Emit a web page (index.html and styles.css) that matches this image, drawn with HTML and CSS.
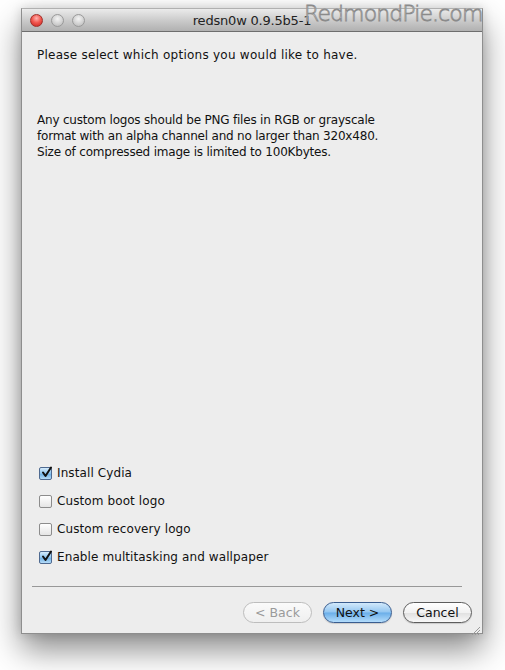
FILE: index.html
```html
<!DOCTYPE html>
<html>
<head>
<meta charset="utf-8">
<link rel="stylesheet" href="styles.css">
</head>
<body>
<div class="stage">
  <div class="window">
    <div class="titlebar">
      <div class="lights">
        <span class="light red"></span>
        <span class="light gray"></span>
        <span class="light gray"></span>
      </div>
      <div class="title">redsn0w 0.9.5b5-1</div>
      <div></div>
    </div>
    <div class="content">
      <p class="intro">Please select which options you would like to have.</p>
      <p class="info">Any custom logos should be PNG files in RGB or grayscale<br>format with an alpha channel and no larger than 320x480.<br>Size of compressed image is limited to 100Kbytes.</p>
      <div class="options">
        <label class="option"><span class="box checked"><svg viewBox="0 0 13 13" width="13" height="13"><path d="M3 6.5 L5.5 10 L11 1.5" fill="none" stroke="#111" stroke-width="2" stroke-linecap="round" stroke-linejoin="round"/></svg></span>Install Cydia</label>
        <label class="option"><span class="box"></span>Custom boot logo</label>
        <label class="option"><span class="box"></span>Custom recovery logo</label>
        <label class="option"><span class="box checked"><svg viewBox="0 0 13 13" width="13" height="13"><path d="M3 6.5 L5.5 10 L11 1.5" fill="none" stroke="#111" stroke-width="2" stroke-linecap="round" stroke-linejoin="round"/></svg></span>Enable multitasking and wallpaper</label>
      </div>
      <div class="separator"></div>
      <div class="buttons">
        <span class="btn disabled">&lt; Back</span>
        <span class="btn primary">Next &gt;</span>
        <span class="btn">Cancel</span>
      </div>
    </div>
    <div class="grip"><svg width="11" height="11" viewBox="0 0 11 11"><path d="M10 2 L2 10 M10 5 L5 10 M10 8 L8 10" stroke="#9a9a9a" stroke-width="1"/></svg></div>
  </div>
  <div class="watermark">RedmondPie.com</div>
</div>
</body>
</html>
```
FILE: styles.css
```css
html, body {
  margin: 0;
  padding: 0;
  background: #ffffff;
}
.stage {
  position: relative;
  width: 505px;
  height: 670px;
  padding: 8px 0 0 21px;
  box-sizing: border-box;
  font-family: "DejaVu Sans", "Lucida Grande", sans-serif;
  overflow: hidden;
}
.window {
  position: relative;
  width: 462px;
  height: 626px;
  box-sizing: border-box;
  background: #ededed;
  border: 1px solid #8e8e8e;
  border-top-color: #b0b0b0;
  box-shadow: 0 16px 30px rgba(0,0,0,0.45), 0 0 10px rgba(0,0,0,0.15);
  display: flex;
  flex-direction: column;
}
.titlebar {
  height: 22px;
  flex: none;
  display: grid;
  grid-template-columns: 1fr auto 1fr;
  align-items: center;
  background: linear-gradient(#ebebeb, #c6c6c6 60%, #b1b1b1);
  border-bottom: 1px solid #6e6e6e;
  border-radius: 4px 4px 0 0;
}
.lights {
  display: flex;
  gap: 8px;
  padding-left: 8px;
  align-items: center;
}
.light {
  width: 13px;
  height: 13px;
  border-radius: 50%;
  box-sizing: border-box;
}
.light.red {
  background: radial-gradient(circle at 50% 30%, #ffb3b0 0, #f25a52 45%, #c8201a 100%);
  border: 1px solid #a0302a;
}
.light.gray {
  background: radial-gradient(circle at 50% 35%, #f4f4f4 0, #d2d2d2 55%, #b4b4b4 100%);
  border: 1px solid #9a9a9a;
}
.title {
  font-size: 13px;
  color: #222;
  letter-spacing: -0.2px;
}
.content {
  flex: 1;
  display: flex;
  flex-direction: column;
  padding: 15px 10px 10px 15px;
  font-size: 12px;
  color: #111;
}
.intro {
  margin: 0;
  line-height: 16px;
  letter-spacing: 0.25px;
}
.info {
  margin: 49px 0 0;
  line-height: 16px;
  letter-spacing: -0.2px;
}
.options {
  margin-top: auto;
  display: flex;
  flex-direction: column;
}
.option {
  height: 28px;
  display: flex;
  align-items: center;
  gap: 5px;
  padding-left: 2px;
  letter-spacing: 0.1px;
}
.box {
  width: 13px;
  height: 13px;
  box-sizing: border-box;
  border: 1px solid #8c8c8c;
  border-radius: 2px;
  background: linear-gradient(#ffffff, #e4e4e4);
  display: inline-flex;
  position: relative;
}
.box svg {
  position: absolute;
  left: 0;
  top: -2px;
}
.box.checked {
  border-color: #4f6a90;
  background: linear-gradient(#d5ebfb, #8cc4ef 50%, #6fb1e6 55%, #b6dcf8);
}
.separator {
  margin: 15px 10px 0 -5px;
  border-top: 1px solid #989898;
}
.buttons {
  margin-top: 15px;
  display: flex;
  justify-content: flex-end;
  gap: 11px;
  padding-right: 0;
}
.btn {
  width: 69px;
  height: 21px;
  box-sizing: border-box;
  border-radius: 11px;
  border: 1px solid #5d5d5d;
  background: linear-gradient(#ffffff, #f2f2f2 50%, #e2e2e2 55%, #f8f8f8);
  display: flex;
  align-items: center;
  justify-content: center;
  font-size: 12.5px;
  color: #111;
  box-shadow: 0 1px 1px rgba(0,0,0,0.15);
}
.btn.disabled {
  border-color: #bdbdbd;
  color: #9a9a9a;
  background: linear-gradient(#fafafa, #efefef);
  box-shadow: none;
}
.btn.primary {
  border-color: #3a5d8f;
  background: linear-gradient(#d2e9fb, #93c6f1 48%, #6aaee9 52%, #b3dcfb);
}
.grip {
  position: absolute;
  right: 1px;
  bottom: 1px;
  width: 11px;
  height: 11px;
}
.watermark {
  position: absolute;
  left: 304px;
  top: 1px;
  font-family: "DejaVu Sans", sans-serif;
  font-weight: 200;
  font-size: 22px;
  letter-spacing: -0.9px;
  color: #f2f2f2;
  -webkit-text-stroke: 0.8px #8a8a8a;
}
```
